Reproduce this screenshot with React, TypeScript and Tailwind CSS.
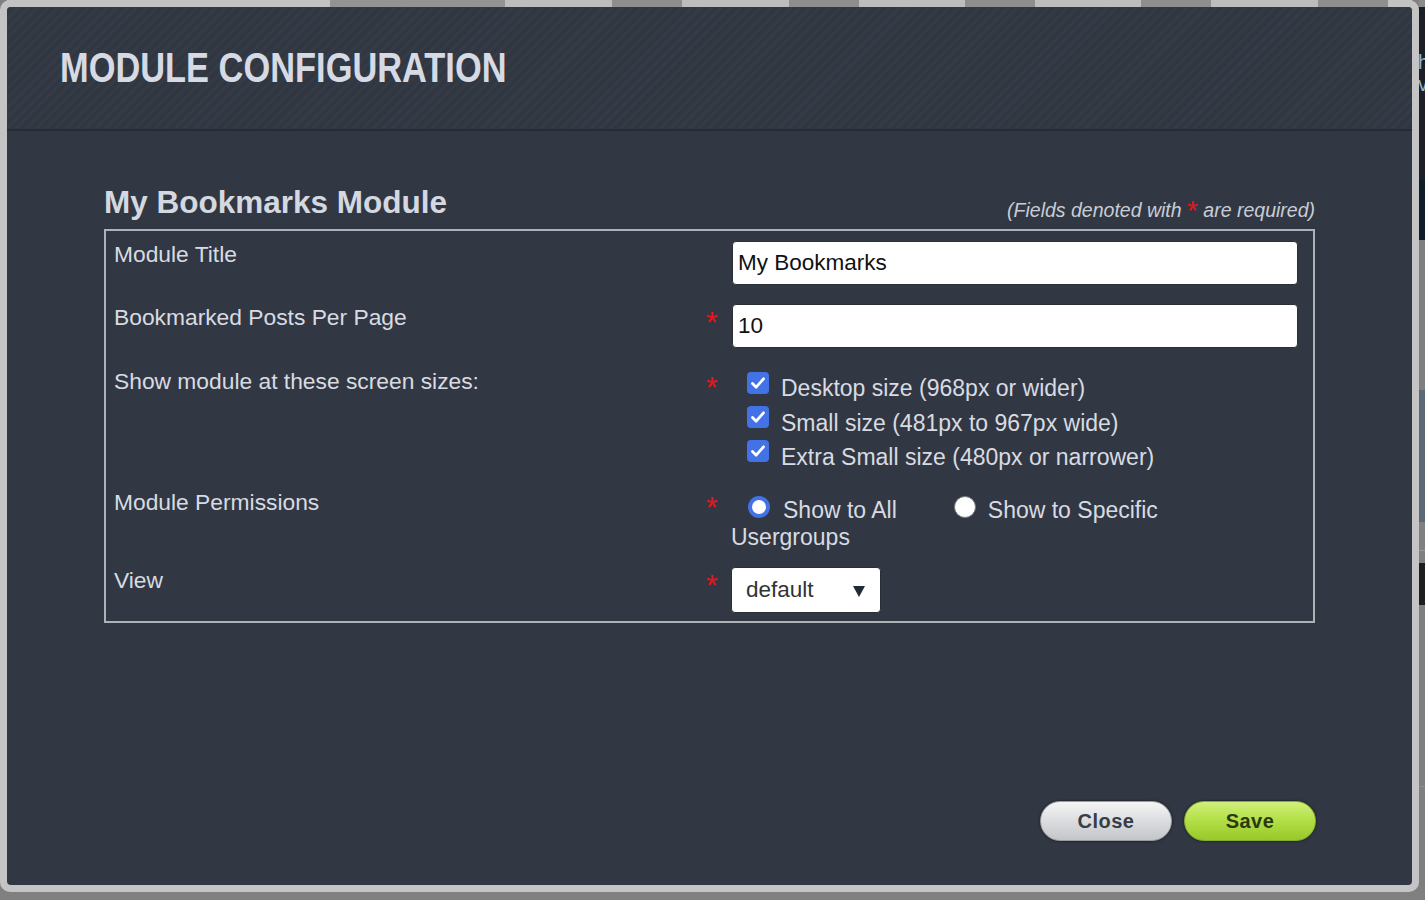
import React from 'react';

const font = { fontFamily: '"Liberation Sans", Arial, sans-serif' };

const Req = () => (
  <span className="block pl-[6px] text-[30px] leading-[26px] mt-[7px] text-[#e8141b] font-['Liberation_Sans',Arial,sans-serif]">*</span>
);

const Check = ({ label }: { label: string }) => (
  <div className="flex items-start h-[34.3px]">
    <span className="mt-[0.4px] flex h-[22px] w-[22px] items-center justify-center rounded-[4px] bg-[#4272e6]">
      <svg width="18" height="18" viewBox="0 0 18 18">
        <path d="M3.5 9.5 L7.2 13.2 L14.5 4.8" fill="none" stroke="#fff" strokeWidth="2.8" strokeLinecap="round" strokeLinejoin="round" />
      </svg>
    </span>
    <span className="ml-[12px] leading-[34.3px] text-[23px]">{label}</span>
  </div>
);

export default function App() {
  return (
    <div className="flex h-[900px] w-[1425px] flex-col overflow-hidden bg-[#808080]" style={font}>
      <div className="flex h-[892px] w-full">
        {/* modal frame */}
        <div className="flex h-full w-[1419px] flex-col rounded-[10px] bg-[#c4c4c4] px-[7px] pb-[7px]">
          {/* top strip */}
          <div className="flex h-[7px] w-full">
            <div className="w-[323px] bg-[#c2c2c2]" />
            <div className="w-[175px] bg-[#939393]" />
            <div className="w-[107px] bg-[#bdbdbd]" />
            <div className="w-[70px] bg-[#8e8e8e]" />
            <div className="w-[107px] bg-[#bdbdbd]" />
            <div className="w-[70px] bg-[#8e8e8e]" />
            <div className="w-[106px] bg-[#bdbdbd]" />
            <div className="w-[70px] bg-[#8e8e8e]" />
            <div className="w-[106px] bg-[#bdbdbd]" />
            <div className="w-[70px] bg-[#8e8e8e]" />
            <div className="w-[107px] bg-[#bdbdbd]" />
            <div className="w-[70px] bg-[#8e8e8e]" />
            <div className="flex-1 bg-[#c2c2c2]" />
          </div>

          {/* dark panel */}
          <div className="flex flex-1 flex-col overflow-hidden rounded-[4px] bg-[#323843]">
            <div className="h-[124px] border-b-2 border-[#272c34] bg-[repeating-linear-gradient(135deg,#353b46_0px,#353b46_3px,#313741_3px,#313741_7px)] pl-[53px] pt-[39px]">
              <h1 className="origin-left scale-x-[0.8] whitespace-nowrap text-[43px] font-bold leading-none text-[#d6dae5]">
                MODULE CONFIGURATION
              </h1>
            </div>

            <div className="flex flex-1 flex-col px-[97px]">
              <div className="mt-[53px] flex items-end justify-between">
                <h2 className="text-[31.5px] font-bold leading-[36px] text-[#d4d8e0]">My Bookmarks Module</h2>
                <p className="mb-[-1px] text-[19.5px] italic leading-[22px] text-[#c9cdd6]">
                  (Fields denoted with{' '}
                  <span className="relative top-[3px] text-[28px] not-italic leading-[0] text-[#e8141b]">*</span> are
                  required)
                </p>
              </div>

              {/* form box */}
              <div className="mt-[9px] border-2 border-[#aeb1b6] pb-[8px] pl-[8px] pr-[15px] text-[22.8px] text-[#d8dbe2]">
                <div className="mt-[6px] grid grid-cols-[586px_32px_566px] items-start">
                  <span className="mt-[4px] leading-[26px]">Module Title</span>
                  <span />
                  <div className="mt-[4px] flex h-[44px] items-center rounded-[4px] border border-[#2a2e35] bg-white pl-[5px] text-[22.5px] text-[#111]">
                    My Bookmarks
                  </div>
                </div>

                <div className="mt-[17px] grid grid-cols-[586px_32px_566px] items-start">
                  <span className="mt-[2px] leading-[26px]">Bookmarked Posts Per Page</span>
                  <Req />
                  <div className="mt-[2px] flex h-[44px] items-center rounded-[4px] border border-[#2a2e35] bg-white pl-[5px] text-[22.5px] text-[#111]">
                    10
                  </div>
                </div>

                <div className="mt-[19px] grid grid-cols-[586px_32px_566px] items-start">
                  <span className="mt-[1px] leading-[26px]">Show module at these screen sizes:</span>
                  <Req />
                  <div className="mt-[4.3px] pl-[15px]">
                    <Check label="Desktop size (968px or wider)" />
                    <Check label="Small size (481px to 967px wide)" />
                    <Check label="Extra Small size (480px or narrower)" />
                  </div>
                </div>

                <div className="mt-[12px] grid grid-cols-[586px_32px_566px] items-start">
                  <span className="mt-[3px] leading-[26px]">Module Permissions</span>
                  <span className="mt-[1px]">
                    <Req />
                  </span>
                  <div className="mt-[10px] text-[23px] leading-[28px]">
                    <div className="flex items-start">
                      <span className="ml-[16px] h-[22px] w-[22px] rounded-full bg-[#4272e6] p-[4px]">
                        <span className="block h-full w-full rounded-full bg-white" />
                      </span>
                      <span className="ml-[13px]">Show to All</span>
                      <span className="ml-[57px] h-[22px] w-[22px] rounded-full border border-[#7a7a7a] bg-white" />
                      <span className="ml-[12px]">Show to Specific</span>
                    </div>
                    <div className="-ml-[1px] -mt-[1px]">Usergroups</div>
                  </div>
                </div>

                <div className="mt-[15.5px] grid grid-cols-[586px_32px_566px] items-start">
                  <span className="mt-[0px] leading-[26px]">View</span>
                  <span className="-mt-[2px]">
                    <Req />
                  </span>
                  <div className="-ml-[1px] flex h-[46px] w-[150px] items-center justify-between rounded-[4px] border border-[#2a2e35] bg-white pl-[14px] pr-[15px] text-[22.5px] text-[#333]">
                    <span className="mt-[1px]">default</span>
                    <svg width="12" height="11" viewBox="0 0 12 11" className="mt-[4px]">
                      <polygon points="0,0 12,0 6,11" fill="#1f2b36" />
                    </svg>
                  </div>
                </div>
              </div>

              {/* buttons */}
              <div className="-mr-[1px] mb-[44px] mt-auto flex justify-end gap-[12px]">
                <button className="h-[40px] w-[132px] rounded-full border border-[#9a9ca1] bg-[linear-gradient(#f5f5f6,#d9dadd_55%,#c3c5c9)] text-[20px] font-bold tracking-[0.5px] text-[#383d48] shadow-[0_0_3px_rgba(0,0,0,0.6)]">
                  Close
                </button>
                <button className="h-[40px] w-[132px] rounded-full border border-[#86ad2a] bg-[linear-gradient(#d0f07a,#b2de45_50%,#98c82a)] text-[20px] font-bold tracking-[0.5px] text-[#2c3a12] shadow-[0_0_3px_rgba(0,0,0,0.6)]">
                  Save
                </button>
              </div>
            </div>
          </div>
        </div>

        {/* page behind overlay, right edge */}
        <div className="flex w-[6px] flex-col overflow-hidden">
          <div className="h-[7px] bg-[#8b8b8b]" />
          <div className="h-[173px] overflow-hidden bg-[#1c2026] pt-[44px] text-[20px] leading-[22px] text-[#8fb4d6]">
            <div className="-ml-[1px]">ha</div>
            <div className="-ml-[1px]">vi</div>
          </div>
          <div className="h-[60px] bg-[#0f1d2b]" />
          <div className="h-[150px] bg-[#7f7f7f]" />
          <div className="h-[132px] bg-[#5b6977]" />
          <div className="h-[28px] bg-[#808080]" />
          <div className="h-[13px] border-t border-[#9a9a9a] bg-[#808080]" />
          <div className="h-[42px] bg-[#1e1e1e]" />
          <div className="h-[182px] border-b border-[#8f8f8f] bg-[#7f7f7f]" />
          <div className="flex-1 bg-[#7f7f7f]" />
        </div>
      </div>
      <div className="flex-1 bg-[#808080]" />
    </div>
  );
}
